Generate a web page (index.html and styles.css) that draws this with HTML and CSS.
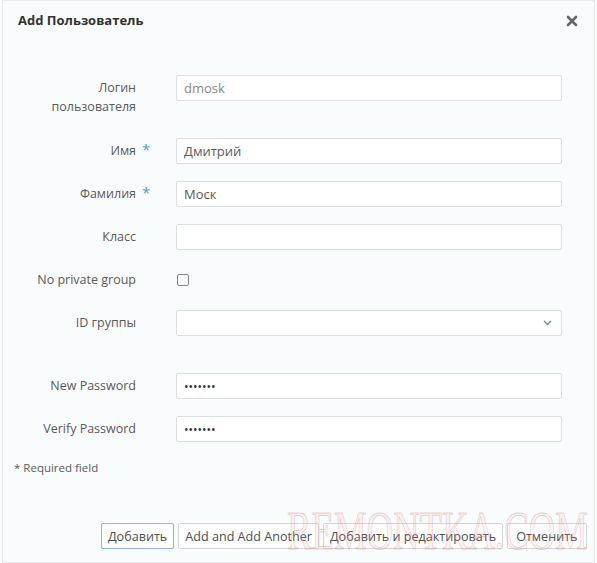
FILE: index.html
```html
<!DOCTYPE html>
<html lang="ru">
<head>
  <meta charset="UTF-8">
  <meta name="viewport" content="width=device-width, initial-scale=1.0">
  <title>Add Пользователь</title>
  <link rel="stylesheet" href="styles.css">
</head>
<body>

<div class="modal">
  <div class="modal-header">
    <h1>Add Пользователь</h1>
    <span class="close">
      <svg width="12" height="12" viewBox="0 0 12 12"><path d="M2 2 L10 10 M10 2 L2 10" stroke="#666" stroke-width="2.6" stroke-linecap="round"/></svg>
    </span>
  </div>

  <form class="modal-body">
    <div class="row row-tall">
      <label>Логин<br>пользователя</label>
      <span class="req"></span>
      <input type="text" class="readonly" value="dmosk">
    </div>
    <div class="row">
      <label>Имя</label>
      <span class="req">*</span>
      <input type="text" value="Дмитрий">
    </div>
    <div class="row">
      <label>Фамилия</label>
      <span class="req">*</span>
      <input type="text" value="Моск">
    </div>
    <div class="row">
      <label>Класс</label>
      <span class="req"></span>
      <input type="text" value="">
    </div>
    <div class="row">
      <label>No private group</label>
      <span class="req"></span>
      <div class="check-cell"><span class="checkbox"></span></div>
    </div>
    <div class="row row-gap">
      <label>ID группы</label>
      <span class="req"></span>
      <div class="select">
        <svg width="9" height="6" viewBox="0 0 9 6"><path d="M1 1 L4.5 4.5 L8 1" fill="none" stroke="#5b8fb5" stroke-width="1.3"/></svg>
      </div>
    </div>
    <div class="row">
      <label>New Password</label>
      <span class="req"></span>
      <input type="password" value="1234567">
    </div>
    <div class="row">
      <label>Verify Password</label>
      <span class="req"></span>
      <input type="password" value="1234567">
    </div>

    <p class="note">* Required field</p>
  </form>

  <div class="modal-footer">
    <button type="button" class="primary">Добавить</button>
    <button type="button">Add and Add Another</button>
    <button type="button">Добавить и редактировать</button>
    <button type="button" class="cancel">Отменить</button>
  </div>

  <div class="watermark">REMONTKA.COM</div>
</div>

</body>
</html>
```

FILE: styles.css
```css
body {
  font-family: "Open Sans", "Noto Sans", sans-serif;
  background-color: #fff;
  margin: 0;
  padding: 0;
}

.modal {
  position: relative;
  box-sizing: border-box;
  width: 593px;
  height: 563px;
  margin-left: 2px;
  background-color: #f9fcfd;
  border: 1px solid #e3e7ea;
  border-top-color: #e9ecee;
  overflow: hidden;
}

.modal-header {
  display: flex;
  justify-content: space-between;
  align-items: center;
  height: 37px;
  padding: 0 16px 0 15px;
}

.modal-header h1 {
  font-size: 13px;
  font-weight: 700;
  color: #333;
  margin: 0;
}

.close {
  display: flex;
  margin-top: 2px;
}

.modal-body {
  padding-top: 37px;
}

.row {
  display: flex;
  align-items: flex-start;
  margin-bottom: 17px;
}

.row-gap {
  margin-bottom: 37px;
}

.row label {
  width: 133px;
  text-align: right;
  font-size: 12.5px;
  line-height: 19px;
  color: #5a5a5a;
  padding-top: 3px;
}

.row-tall label {
  padding-bottom: 5px;
}

.req {
  width: 40px;
  box-sizing: border-box;
  padding-left: 6px;
  padding-top: 2px;
  font-size: 15px;
  line-height: 19px;
  color: #4d9fd6;
}

input {
  width: 386px;
  height: 26px;
  box-sizing: border-box;
  padding: 0 7px;
  border: 1px solid #dcdfe2;
  border-radius: 2px;
  background-color: #fff;
  font-family: "Open Sans", "Noto Sans", sans-serif;
  font-size: 13px;
  color: #5a5a5a;
  outline: none;
}

input.readonly {
  color: #888;
}

input[type="password"] {
  font-size: 12px;
  color: #333;
}

.check-cell {
  height: 26px;
  display: flex;
  align-items: center;
}

.checkbox {
  display: block;
  width: 10px;
  height: 10px;
  border: 1px solid #888;
  border-radius: 2px;
  background-color: #fff;
  margin-left: 1px;
}

.select {
  width: 386px;
  height: 26px;
  box-sizing: border-box;
  border: 1px solid #dcdfe2;
  border-radius: 2px;
  background-color: #fff;
  display: flex;
  justify-content: flex-end;
  align-items: center;
  padding-right: 9px;
}

.note {
  margin: 18px 0 0 11px;
  font-size: 11.5px;
  color: #5a5a5a;
}

.modal-footer {
  position: absolute;
  left: 98px;
  top: 522px;
  display: flex;
  gap: 4px;
}

.modal-footer button {
  height: 26px;
  padding: 0 6px;
  border: 1px solid #d5d8db;
  border-radius: 2px;
  background-color: #fff;
  font-family: "Open Sans", "Noto Sans", sans-serif;
  font-size: 12.6px;
  color: #505050;
  cursor: pointer;
}

.modal-footer button.primary {
  border-color: #92b3de;
}

.modal-footer button.cancel {
  padding: 0 8px;
}

.watermark {
  position: absolute;
  left: 284px;
  top: 499px;
  font-family: "Liberation Serif", serif;
  font-size: 54px;
  transform: scaleX(0.68);
  transform-origin: left top;
  color: rgba(235, 170, 170, 0.12);
  -webkit-text-stroke: 1px rgba(215, 120, 120, 0.35);
  pointer-events: none;
}
```
